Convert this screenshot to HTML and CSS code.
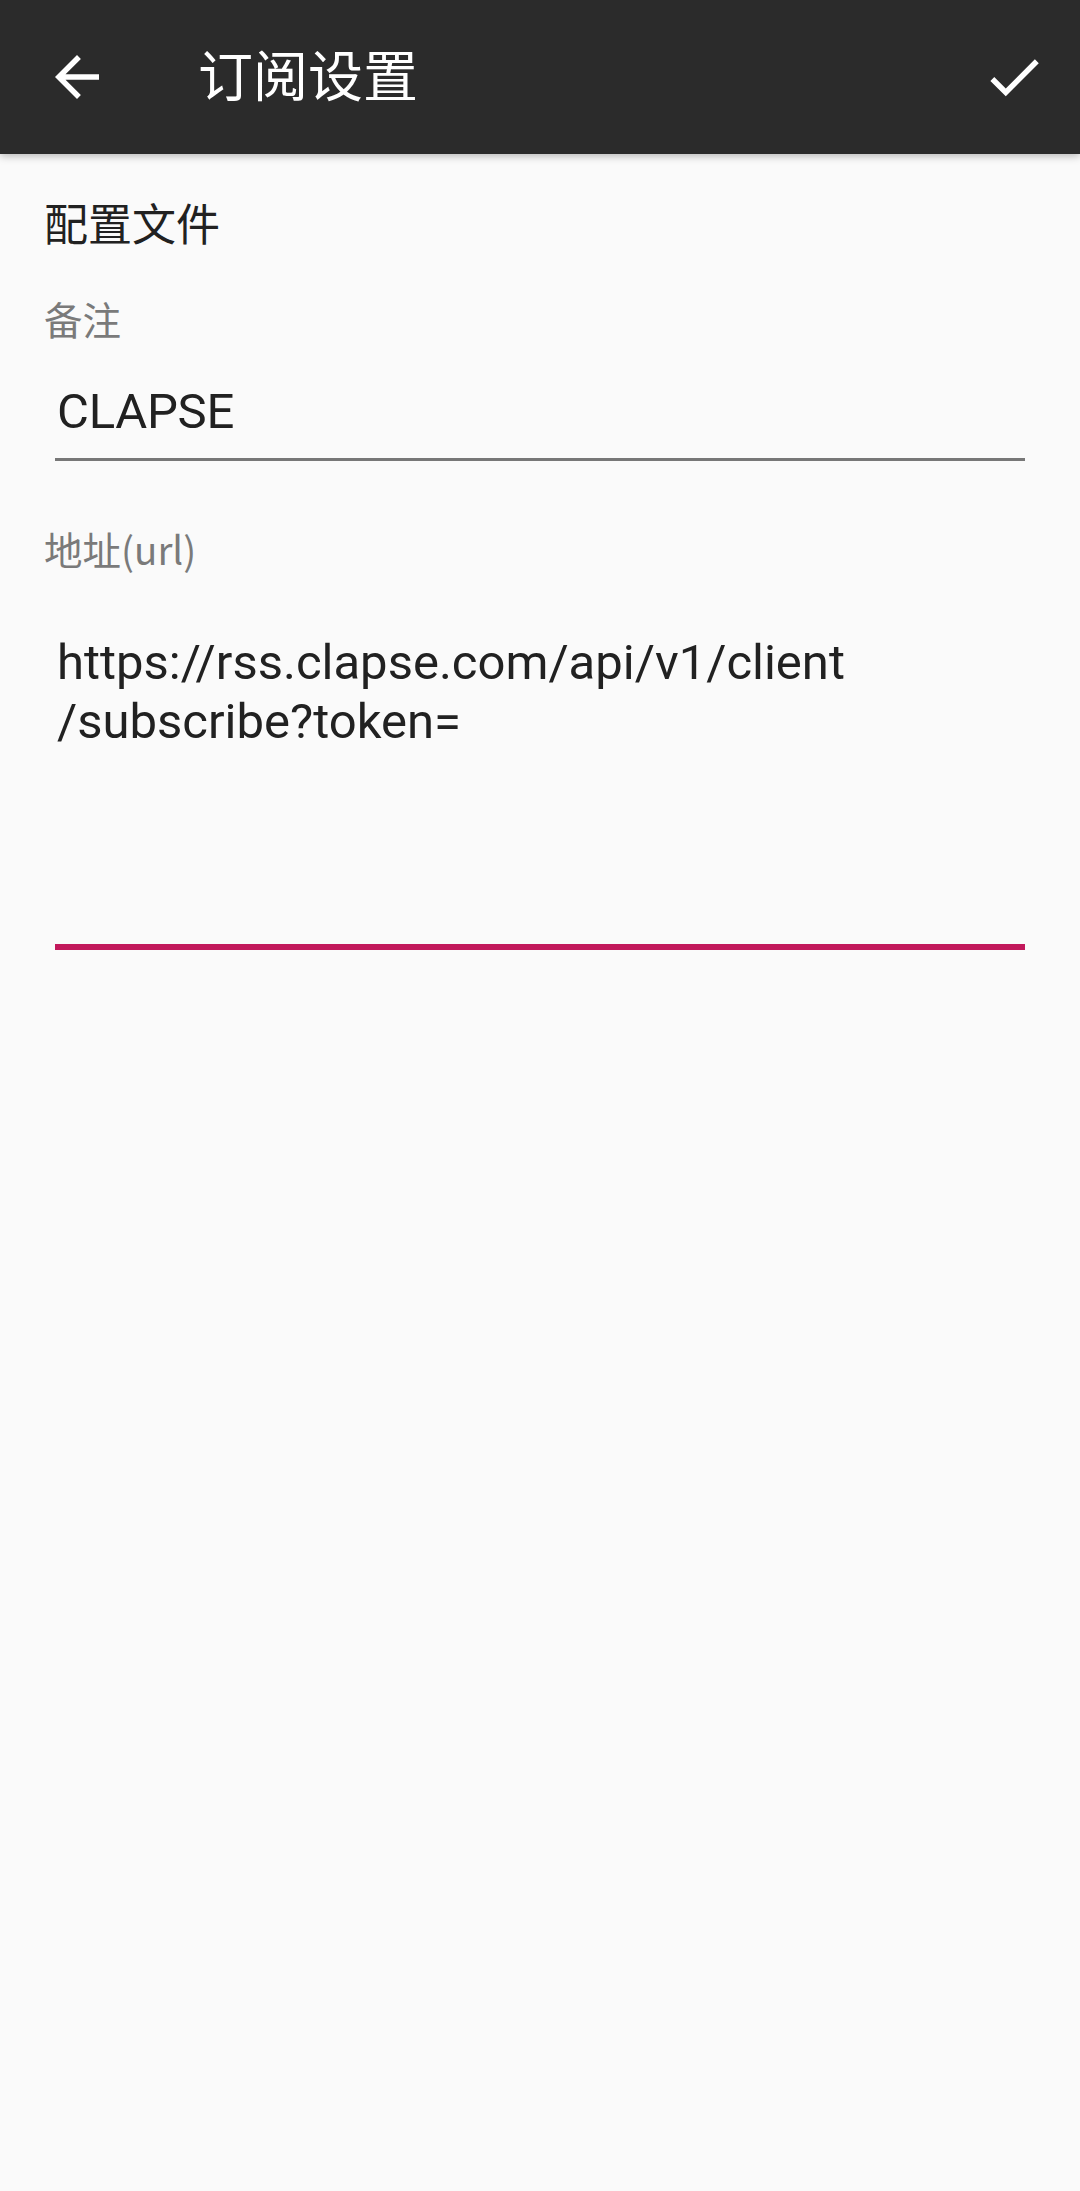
FILE: index.html
```html
<!DOCTYPE html>
<html lang="zh-CN">
<head>
<meta charset="utf-8">
<title>订阅设置</title>
<link rel="stylesheet" href="styles.css">
</head>
<body>
<header class="toolbar">
  <button class="toolbar__nav" aria-label="返回">
    <svg viewBox="0 0 24 24" class="icon"><path d="M20 11H7.83l5.59-5.59L12 4l-8 8 8 8 1.41-1.41L7.83 13H20v-2z"/></svg>
  </button>
  <h1 class="toolbar__title">订阅设置</h1>
  <button class="toolbar__action" aria-label="保存">
    <svg viewBox="0 0 24 24" class="icon"><path d="M9 16.17L4.83 12l-1.42 1.41L9 19 21 7l-1.41-1.41z"/></svg>
  </button>
</header>
<main class="content">
  <div class="section-title">配置文件</div>
  <div class="field-label">备注</div>
  <div class="field"><div class="field__value">CLAPSE</div></div>
  <div class="field-label field-label--second">地址(url)</div>
  <div class="field field--multi field--focused"><div class="field__value field__value--url">https://rss.clapse.com/api/v1/client<br>/subscribe?token=</div></div>
</main>
</body>
</html>
```
FILE: styles.css
```css
html, body {
  margin: 0;
  padding: 0;
  background: #fafafa;
  width: 1080px;
  height: 2191px;
  font-family: Roboto, "Noto Sans CJK SC", sans-serif;
}

.toolbar {
  position: relative;
  z-index: 2;
  height: 154px;
  background: #2b2b2b;
  display: flex;
  align-items: center;
  box-shadow: 0 2px 8px rgba(0, 0, 0, 0.28);
}

.toolbar__nav,
.toolbar__action {
  background: none;
  border: 0;
  padding: 0;
  display: flex;
  align-items: center;
  justify-content: center;
  height: 154px;
}

.toolbar__nav {
  width: 154px;
}

.toolbar__action {
  width: 132px;
  margin-left: auto;
}

.icon {
  width: 66px;
  height: 66px;
  fill: #ffffff;
}

.toolbar__title {
  margin: 0 0 0 44px;
  font-family: Roboto, "Noto Sans CJK SC", sans-serif;
  font-weight: 400;
  font-size: 55px;
  line-height: 60px;
  color: #ffffff;
}

.content {
  padding: 38px 44px 0 44px;
}

.section-title {
  font-family: "Noto Sans CJK SC", sans-serif;
  font-size: 44px;
  line-height: 60px;
  color: #212121;
}

.field-label {
  margin-top: 40px;
  font-family: "Noto Sans CJK SC", sans-serif;
  font-size: 38.5px;
  line-height: 52px;
  color: #7a7a7a;
}

.field-label--second {
  margin-top: 61px;
}

.field {
  margin: 0 11px;
  padding: 38px 0 16px 2px;
  border-bottom: 3px solid #777777;
}

.field__value {
  font-family: Roboto, sans-serif;
  font-size: 49px;
  line-height: 60px;
  letter-spacing: -0.25px;
  color: #212121;
}

.field--multi {
  padding-top: 59px;
  padding-bottom: 193px;
}

.field--focused {
  border-bottom: 6px solid #c2185b;
}

.field__value--url {
  line-height: 59px;
  letter-spacing: 0;
}
```
